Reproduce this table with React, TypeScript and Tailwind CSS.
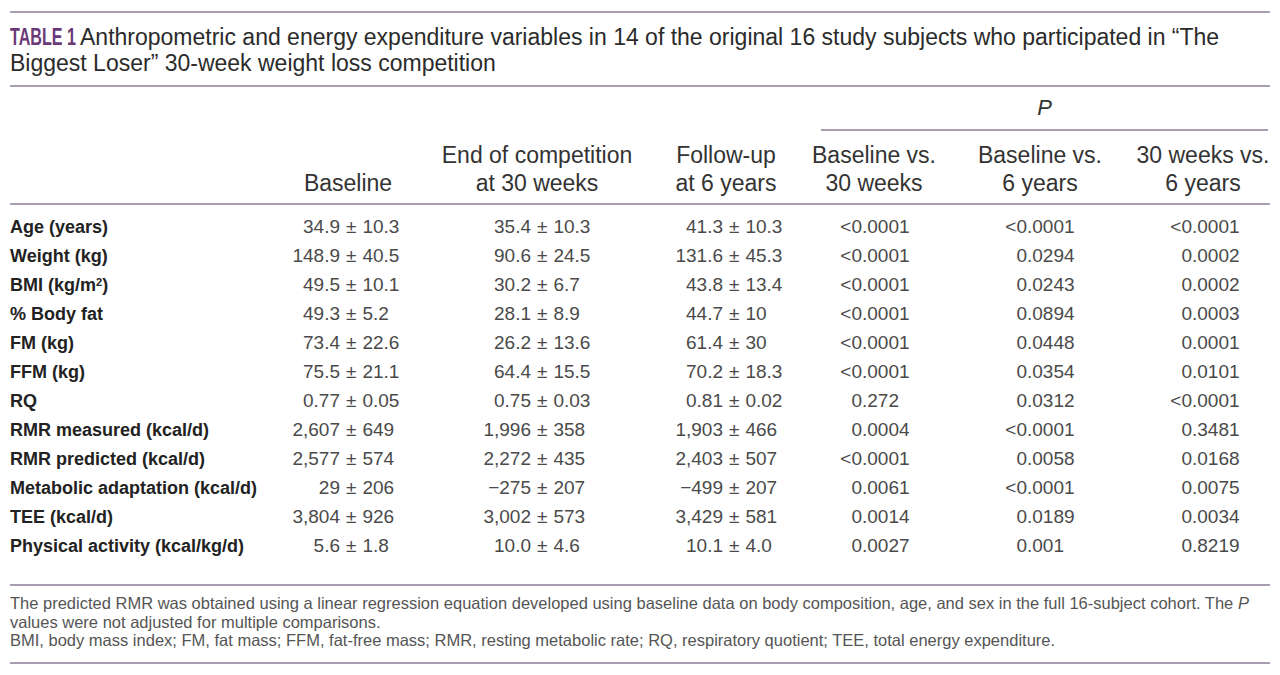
import React from 'react';

const rows: [React.ReactNode, string, string, string, string, string, string][] = [
  ['Age (years)', '34.9 ± 10.3', '35.4 ± 10.3', '41.3 ± 10.3', '<0.0001', '<0.0001', '<0.0001'],
  ['Weight (kg)', '148.9 ± 40.5', '90.6 ± 24.5', '131.6 ± 45.3', '<0.0001', '0.0294', '0.0002'],
  [
    <>
      BMI (kg/m<sup className="text-[11px]">2</sup>)
    </>,
    '49.5 ± 10.1',
    '30.2 ± 6.7',
    '43.8 ± 13.4',
    '<0.0001',
    '0.0243',
    '0.0002',
  ],
  ['% Body fat', '49.3 ± 5.2', '28.1 ± 8.9', '44.7 ± 10', '<0.0001', '0.0894', '0.0003'],
  ['FM (kg)', '73.4 ± 22.6', '26.2 ± 13.6', '61.4 ± 30', '<0.0001', '0.0448', '0.0001'],
  ['FFM (kg)', '75.5 ± 21.1', '64.4 ± 15.5', '70.2 ± 18.3', '<0.0001', '0.0354', '0.0101'],
  ['RQ', '0.77 ± 0.05', '0.75 ± 0.03', '0.81 ± 0.02', '0.272', '0.0312', '<0.0001'],
  ['RMR measured (kcal/d)', '2,607 ± 649', '1,996 ± 358', '1,903 ± 466', '0.0004', '<0.0001', '0.3481'],
  ['RMR predicted (kcal/d)', '2,577 ± 574', '2,272 ± 435', '2,403 ± 507', '<0.0001', '0.0058', '0.0168'],
  ['Metabolic adaptation (kcal/d)', '29 ± 206', '−275 ± 207', '−499 ± 207', '0.0061', '<0.0001', '0.0075'],
  ['TEE (kcal/d)', '3,804 ± 926', '3,002 ± 573', '3,429 ± 581', '0.0014', '0.0189', '0.0034'],
  ['Physical activity (kcal/kg/d)', '5.6 ± 1.8', '10.0 ± 4.6', '10.1 ± 4.0', '0.0027', '0.001', '0.8219'],
];

const grid = 'grid grid-cols-[243px_190px_188px_190px_106px_226px_115px]';

// value with ± : left part right-aligned so the ± lines up in the column
const PlusMinus = ({ v, w }: { v: string; w: string }) => {
  const [a, b] = v.split(' ± ');
  return (
    <div className="flex items-center whitespace-nowrap">
      <span className={`${w} text-right`}>{a}</span>
      <span className="mx-[6px]">±</span>
      <span>{b}</span>
    </div>
  );
};

// p value aligned on the decimal point
const PVal = ({ v, w }: { v: string; w: string }) => {
  const i = v.indexOf('.');
  return (
    <div className="flex items-center whitespace-nowrap">
      <span className={`${w} text-right`}>{v.slice(0, i)}</span>
      <span>{v.slice(i)}</span>
    </div>
  );
};

const Rule = () => <div className="h-[2px] w-full bg-[#a89db3]" />;

export default function App() {
  return (
    <div
      className="w-[1280px] h-[675px] bg-white px-[10px] pt-[11px] overflow-hidden text-[#333]"
      style={{ fontFamily: '"Liberation Sans", Arial, sans-serif' }}
    >
      <Rule />

      {/* Title */}
      <div className="mt-[11px] text-[23px] leading-[26px] text-[#2b2b2b]">
        <span className="inline-block w-[70px] whitespace-nowrap font-bold text-[#6a3a78]">
          <span className="inline-block origin-left scale-x-[0.7]">TABLE 1</span>
        </span>
        Anthropometric and energy expenditure variables in 14 of the original 16 study subjects who participated in “The
        <br />
        Biggest Loser” 30-week weight loss competition
      </div>

      <div className="mt-[9px]">
        <Rule />
      </div>

      {/* Header */}
      <div className={`${grid} mt-[8px]`}>
        <div className="col-start-5 col-span-3 border-b-2 border-[#a89db3] pb-[8px] flex justify-center">
          <span className="text-[22px] leading-[26px] italic text-[#333]">P</span>
        </div>
      </div>
      <div className={`${grid} mt-[10px] pb-[6px] text-[23px] leading-[28px] text-[#333]`}>
        <div />
        <div className="flex justify-center items-end whitespace-nowrap">Baseline</div>
        <div className="flex flex-col items-center whitespace-nowrap">
          <span>End of competition</span>
          <span>at 30 weeks</span>
        </div>
        <div className="flex flex-col items-center whitespace-nowrap">
          <span>Follow-up</span>
          <span>at 6 years</span>
        </div>
        <div className="flex flex-col items-center whitespace-nowrap">
          <span>Baseline vs.</span>
          <span>30 weeks</span>
        </div>
        <div className="flex flex-col items-center whitespace-nowrap">
          <span>Baseline vs.</span>
          <span>6 years</span>
        </div>
        <div className="flex flex-col items-center whitespace-nowrap pr-[15px]">
          <span>30 weeks vs.</span>
          <span>6 years</span>
        </div>
      </div>
      <Rule />

      {/* Body */}
      <div className="pt-[8px] pb-[23px]">
        {rows.map((r, i) => (
          <div key={i} className={`${grid} h-[29px] items-center text-[19px] text-[#4a4a4a]`}>
            <div className="text-[18px] font-bold text-[#222] whitespace-nowrap">{r[0]}</div>
            <PlusMinus v={r[1]} w="w-[87px]" />
            <PlusMinus v={r[2]} w="w-[88px]" />
            <PlusMinus v={r[3]} w="w-[92px]" />
            <PVal v={r[4]} w="w-[41px]" />
            <PVal v={r[5]} w="w-[100px]" />
            <PVal v={r[6]} w="w-[39px]" />
          </div>
        ))}
      </div>
      <Rule />

      {/* Footnotes */}
      <div className="pt-[8px] pb-[12px] text-[16.5px] leading-[18.5px] text-[#555]">
        <p className="whitespace-nowrap">
          The predicted RMR was obtained using a linear regression equation developed using baseline data on body
          composition, age, and sex in the full 16-subject cohort. The <i>P</i>
          <br />
          values were not adjusted for multiple comparisons.
        </p>
        <p className="whitespace-nowrap">
          BMI, body mass index; FM, fat mass; FFM, fat-free mass; RMR, resting metabolic rate; RQ, respiratory quotient;
          TEE, total energy expenditure.
        </p>
      </div>
      <Rule />
    </div>
  );
}
